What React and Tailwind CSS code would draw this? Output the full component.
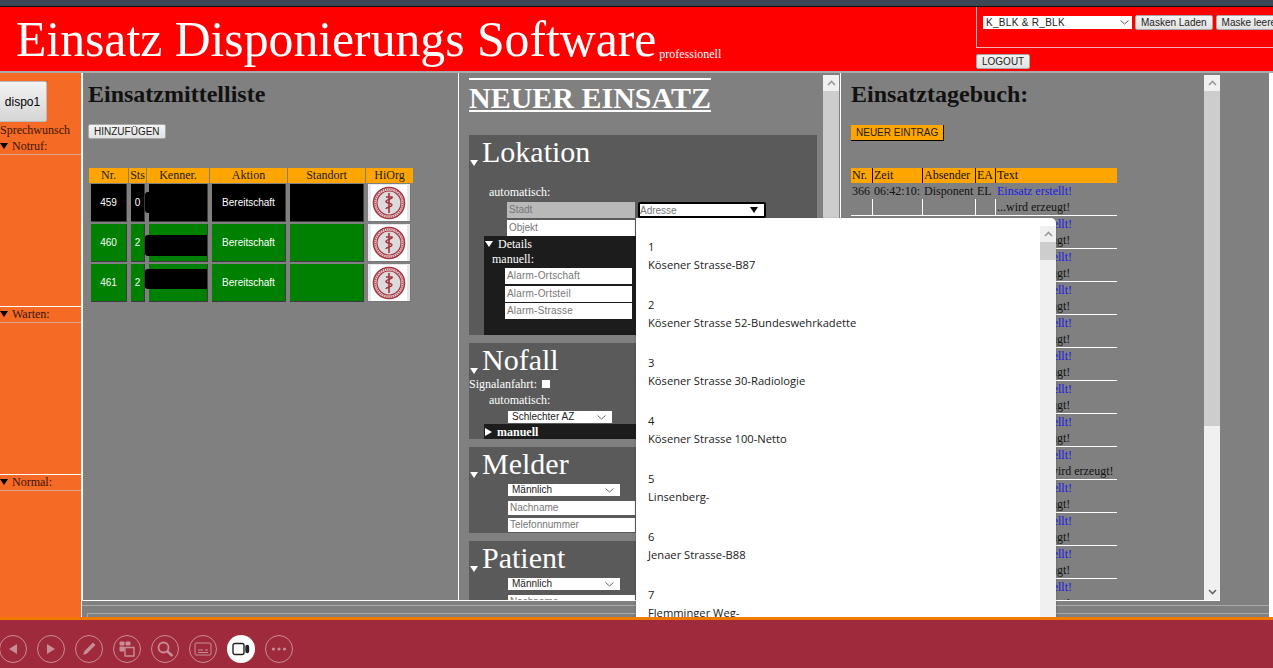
const serif = "font-['Liberation_Serif',serif]";
const sans = "font-['Liberation_Sans',sans-serif]";

const vehicles = [
  { nr: "459", sts: "0", bg: "bg-black", mask: "top-[8px] h-[21px]" },
  { nr: "460", sts: "2", bg: "bg-[#008000]", mask: "top-[11px] h-[21px]" },
  { nr: "461", sts: "2", bg: "bg-[#008000]", mask: "top-[5px] h-[20px]" },
];

const places = [
  "Kösener Strasse-B87",
  "Kösener Strasse 52-Bundeswehrkadette",
  "Kösener Strasse 30-Radiologie",
  "Kösener Strasse 100-Netto",
  "Linsenberg-",
  "Jenaer Strasse-B88",
  "Flemminger Weg-",
];

const vehicleCols = "grid grid-cols-[39px_17px_62px_77px_77px_47px] gap-x-px";
const journalCols = "grid grid-cols-[21px_49px_52px_19px_121px] gap-x-px";

function Btn({ children, className = "" }) {
  return (
    <button className={`${sans} h-[15px] shrink-0 rounded-[2px] border border-[#a8a8a8] bg-gradient-to-b from-[#f4f4f4] to-[#e2e2e2] px-[5px] text-[10px] leading-[13px] text-[#222] ${className}`}>
      {children}
    </button>
  );
}

function Arrow({ className = "" }) {
  return <span className={`inline-block shrink-0 border-x-[4px] border-x-transparent border-t-[6px] border-t-current ${className}`} />;
}

function Field({ children, className = "" }) {
  return (
    <div className={`${sans} flex h-[16px] items-center bg-white pl-[2px] text-[10px] leading-none text-[#777] ${className}`}>
      {children}
    </div>
  );
}

function FakeSelect({ children, className = "" }) {
  return (
    <div className={`${sans} flex h-[12px] items-center justify-between bg-white pl-[4px] pr-[6px] text-[10px] leading-none text-[#222] ${className}`}>
      {children}
      <svg width="9" height="5" viewBox="0 0 9 5"><path d="M.5.5l4 3.5 4-3.5" fill="none" stroke="#666" strokeWidth="1" /></svg>
    </div>
  );
}

function Scrollbar({ thumb, className = "" }) {
  return (
    <div className={`flex w-[16px] shrink-0 flex-col bg-[#f0f0f0] ${className}`}>
      <div className="flex h-[16px] items-center justify-center">
        <svg width="9" height="6" viewBox="0 0 9 6"><path d="M1 5l3.5-3.5L8 5" fill="none" stroke="#999" strokeWidth="1.6" /></svg>
      </div>
      <div className={`bg-[#cdcdcd] ${thumb}`} />
      <div className="flex-1" />
      <div className="flex h-[16px] items-center justify-center">
        <svg width="9" height="6" viewBox="0 0 9 6"><path d="M1 1l3.5 3.5L8 1" fill="none" stroke="#666" strokeWidth="1.6" /></svg>
      </div>
    </div>
  );
}

function HiOrgLogo() {
  return (
    <div className="flex h-[38px] w-[44px] items-center justify-center border-b border-r border-[#777] bg-[#e8e8e8]">
      <svg width="36" height="36" viewBox="0 0 36 36">
        <rect width="36" height="36" fill="#fff" />
        <circle cx="18" cy="18" r="15.5" fill="#e2dfe0" stroke="#a8323c" strokeWidth="1.6" />
        <circle cx="18" cy="18" r="12" fill="#dcdadb" stroke="#a8323c" strokeWidth="1.2" />
        <circle cx="18" cy="18" r="13.8" fill="none" stroke="#b5505a" strokeWidth="1.6" strokeDasharray="1.2 1" />
        <path d="M18 8v20" stroke="#a8323c" strokeWidth="1.6" />
        <path d="M15 12h6c1.5 1.5-6 2.5-6 4.5s6 1.5 6 3.5-6 2-6 4" fill="none" stroke="#a8323c" strokeWidth="1.5" />
      </svg>
    </div>
  );
}

function VehicleList() {
  const cell = "ml-[2px] mr-px flex h-[38px] items-center justify-center border-b border-r border-[#3c3c3c] text-[10px] text-white";
  const head = `${serif} bg-[#ffa500] text-center text-[12px] leading-[15px] text-[#222]`;
  return (
    <section className="w-[377px] shrink-0 overflow-hidden border-r border-l border-white bg-[#808080] pl-[5px]">
      <h2 className={`${serif} mt-[8px] text-[24px] font-bold leading-[26px] text-[#111]`}>Einsatzmittelliste</h2>
      <Btn className="mt-[17px]">HINZUFÜGEN</Btn>
      <div className={`${sans} ${vehicleCols} ml-px mt-[27px]`}>
        {["Nr.", "Sts", "Kenner.", "Aktion", "Standort", "HiOrg"].map((h) => (
          <div key={h} className={head}>{h}</div>
        ))}
      </div>
      <div className="ml-px mt-px flex flex-col gap-[2px]">
        {vehicles.map((v) => (
          <div key={v.nr} className={`${sans} ${vehicleCols}`}>
            <div className={`${cell} ${v.bg}`}>{v.nr}</div>
            <div className={`${cell} ${v.bg}`}>{v.sts}</div>
            <div className={`${cell} ${v.bg} relative`}>
              <div className={`absolute -left-[4px] right-0 rounded-l-[3px] bg-black ${v.mask}`} />
            </div>
            <div className={`${cell} ${v.bg}`}>Bereitschaft</div>
            <div className={`${cell} ${v.bg}`}>&nbsp;</div>
            <div className="mx-[2px] flex"><HiOrgLogo /></div>
          </div>
        ))}
      </div>
    </section>
  );
}

function SectionTitle({ children }) {
  return (
    <div className="flex items-end leading-none text-white">
      <Arrow className="mb-[3px] ml-[1px] mr-[4px]" />
      <span className="text-[30px] leading-[34px]">{children}</span>
    </div>
  );
}

function NewIncident() {
  return (
    <section className={`${serif} flex w-[382px] shrink-0 overflow-hidden border-r border-white bg-[#808080]`}>
      <div className="w-[364px] shrink-0 pl-[10px]">
        <h1 className="mt-[5px] w-fit border-y-[2px] border-white pt-[6px] text-[30px] font-bold leading-[24px] text-white">NEUER EINSATZ</h1>
        <div className="mt-[23px] h-[200px] w-[348px] bg-[#5a5a5a]">
          <SectionTitle>Lokation</SectionTitle>
          <div className="ml-[20px] mt-[15px] text-[12px] leading-[16px] text-white">automatisch:</div>
          <div className="ml-[38px] mt-[2px] flex gap-[3px]">
            <Field className="w-[128px] !bg-[#b9b9b9]">Stadt</Field>
            <div className={`${sans} flex h-[16px] w-[128px] items-center justify-between rounded-[2px] border-2 border-black bg-white pr-[6px] text-[10px] text-[#777]`}>
              Adresse<Arrow className="text-black" />
            </div>
          </div>
          <Field className="ml-[38px] mt-[2px] w-[128px]">Objekt</Field>
          <div className="ml-[15px] h-[99px] bg-[#1c1c1c] text-[12px] leading-[16px] text-white">
            <div className="flex h-[15px] items-center pl-[1px]"><Arrow className="mr-[5px]" />Details</div>
            <div className="ml-[8px]">manuell:</div>
            <div className="ml-[21px] mt-px flex w-[127px] flex-col gap-[1.5px] tracking-[0.2px]">
              <Field>Alarm-Ortschaft</Field>
              <Field>Alarm-Ortsteil</Field>
              <Field>Alarm-Strasse</Field>
            </div>
          </div>
        </div>
        <div className="mt-[8px] h-[96px] w-[348px] bg-[#5a5a5a] text-[12px] leading-[16px] text-white">
          <SectionTitle>Nofall</SectionTitle>
          <div className="-mt-[1px] flex items-center">Signalanfahrt:<span className="ml-[5px] h-[8px] w-[8px] bg-white" /></div>
          <div className="ml-[20px]">automatisch:</div>
          <FakeSelect className="ml-[39px] mt-[3px] w-[104px]">Schlechter AZ</FakeSelect>
          <div className="ml-[15px] mt-[1px] flex h-[15px] items-center bg-[#1c1c1c] pl-[1px] font-bold">
            <span className="mr-[5px] border-y-[4px] border-l-[7px] border-y-transparent border-l-white" />manuell
          </div>
        </div>
        <div className="mt-[8px] h-[86px] w-[348px] bg-[#5a5a5a]">
          <SectionTitle>Melder</SectionTitle>
          <FakeSelect className="ml-[39px] mt-[3px] w-[112px]">Männlich</FakeSelect>
          <Field className="ml-[39px] mt-[5px] w-[127px] !h-[14px]">Nachname</Field>
          <Field className="ml-[39px] mt-[3px] w-[127px] !h-[14px]">Telefonnummer</Field>
        </div>
        <div className="mt-[8px] h-[60px] w-[348px] bg-[#5a5a5a]">
          <SectionTitle>Patient</SectionTitle>
          <FakeSelect className="ml-[39px] mt-[3px] w-[112px]">Männlich</FakeSelect>
          <Field className="ml-[39px] mt-[5px] w-[127px] !h-[14px]">Nachname</Field>
        </div>
      </div>
      <Scrollbar thumb="flex-1" className="mt-[2px]" />
    </section>
  );
}

function Journal() {
  const rows = Array.from({ length: 13 }, (_, i) => i);
  return (
    <section className={`${serif} flex h-full w-[379px] shrink-0 overflow-hidden border-b border-white bg-[#808080]`}>
      <div className="w-[363px] shrink-0 pl-[10px]">
        <h2 className="mt-[8px] text-[24px] font-bold leading-[26px] text-[#111]">Einsatztagebuch:</h2>
        <Btn className="mt-[18px] h-[16px] !rounded-none !border-0 !border-b !border-r !border-black !bg-none bg-[#ffa500]">NEUER EINTRAG</Btn>
        <div className={`${journalCols} mt-[25px] w-[266px] bg-[#111] text-[12px] leading-[15px] text-[#111]`}>
          {["Nr.", "Zeit", "Absender", "EA", "Text"].map((h) => (
            <div key={h} className="bg-[#ffa500] pl-px">{h}</div>
          ))}
        </div>
        {rows.map((i) => (
          <div key={i} className="h-[33px] w-[266px] border-b border-white text-[12px] leading-[16px] text-[#111]">
            <div className={journalCols}>
              <div className="pl-px">{i === 0 ? "366" : ""}</div>
              <div className="pl-px">{i === 0 ? "06:42:10:" : ""}</div>
              <div className="pl-px">{i === 0 ? "Disponent" : ""}</div>
              <div className="pl-px">{i === 0 ? "EL" : ""}</div>
              <div className="pl-px text-[#1a1ae6]">Einsatz erstellt!</div>
            </div>
            <div className={`${journalCols} h-[16px]`}>
              <div />
              <div className="-ml-px border-l border-white" />
              <div className="-ml-px border-l border-white" />
              <div className="-ml-px border-l border-white" />
              <div className="-ml-px whitespace-nowrap border-l border-white pl-px">{i === 8 ? "...Vorgang wird erzeugt!" : "...wird erzeugt!"}</div>
            </div>
          </div>
        ))}
      </div>
      <Scrollbar thumb="h-[335px]" className="mt-[2px]" />
    </section>
  );
}

function Toolbar() {
  const ring = "flex h-[28px] w-[28px] items-center justify-center rounded-full border border-[#c98d96]";
  const c = "#c98d96";
  return (
    <footer className="flex h-[51px] shrink-0 items-start gap-[10px] border-t-[3px] border-[#f07a00] bg-[#9e2a3b] pt-[15px]">
      <div className={`${ring} -ml-px`}><svg width="12" height="14" viewBox="0 0 12 14"><path d="M10 2v10L2 7z" fill={c} /></svg></div>
      <div className={ring}><svg width="12" height="14" viewBox="0 0 12 14"><path d="M2 2v10l8-5z" fill={c} /></svg></div>
      <div className={ring}><svg width="18" height="18" viewBox="0 0 18 18"><path d="M3 15l1.5-4L13 2.5 15.5 5 7 13.5z" fill={c} /></svg></div>
      <div className={ring}><svg width="18" height="18" viewBox="0 0 18 18" fill="none" stroke={c}><path d="M2 2h4v3H2zM8 2h4v3H8zM2 7h4v4H2z" fill={c} /><path d="M7 7.500h9v8.500H7z" strokeWidth="1.4" /></svg></div>
      <div className={ring}><svg width="18" height="18" viewBox="0 0 18 18" fill="none" stroke={c} strokeWidth="1.8"><circle cx="7.500" cy="7.500" r="5" /><path d="M11 11l5.500 5" strokeWidth="2.400" /></svg></div>
      <div className={ring}><svg width="18" height="14" viewBox="0 0 18 14" fill="none" stroke={c}><rect x="1" y="1" width="16" height="12" rx="1" /><path d="M4 8h5M11 8h3M4 10.500h10" /></svg></div>
      <div className="flex h-[28px] w-[28px] items-center justify-center rounded-full bg-white"><svg width="18" height="14" viewBox="0 0 18 14" fill="none" stroke="#222" strokeWidth="1.4"><rect x="1" y="1.500" width="11" height="11" rx="2" /><rect x="14" y="3.500" width="2.500" height="7" rx="1.200" fill="#222" /></svg></div>
      <div className={ring}><svg width="16" height="4" viewBox="0 0 16 4" fill={c}><circle cx="2.500" cy="2" r="1.600" /><circle cx="8" cy="2" r="1.600" /><circle cx="13.500" cy="2" r="1.600" /></svg></div>
    </footer>
  );
}

export default function App() {
  return (
    <div className="flex h-[668px] w-[1273px] flex-col overflow-hidden bg-white">
      <div className="h-[7px] shrink-0 border-b border-[#111] bg-[#3b4754]" />
      <header className={`${serif} flex h-[64px] shrink-0 justify-between bg-[#ff0000] text-white`}>
        <div className="flex items-end whitespace-nowrap pl-[16px]">
          <span className="text-[49.7px] leading-[62px]">Einsatz Disponierungs Software</span>
          <span className="mb-[11px] ml-[3px] text-[12px] leading-none">professionell</span>
        </div>
        <div className="w-[297px] shrink-0 overflow-hidden">
          <div className="flex h-[41px] items-start gap-[3px] border-b border-l border-[#f2b0b0] pl-[6px] pt-[8px]">
            <div className={`${sans} mt-px flex h-[13px] w-[149px] shrink-0 items-center justify-between bg-white pl-[3px] pr-[3px] text-[10px] tracking-[0.3px] text-[#222]`}>
              K_BLK &amp; R_BLK
              <svg width="9" height="5" viewBox="0 0 9 5"><path d="M.5.5l4 3.500 4-3.500" fill="none" stroke="#555" /></svg>
            </div>
            <Btn>Masken Laden</Btn>
            <Btn>Maske leeren</Btn>
          </div>
          <Btn className="mt-[4px]">LOGOUT</Btn>
        </div>
      </header>
      <main className="relative flex min-h-0 flex-1 overflow-hidden border-t-2 border-[#aaa] bg-[#808080]">
        <aside className={`${serif} w-[82px] shrink-0 border-r border-white bg-[#f56a24] text-[12px] leading-[16px] text-[#3a1505]`}>
          <button className={`${sans} -ml-[2px] mt-[8px] block h-[41px] w-[49px] rounded-[2px] border border-[#bbb] bg-gradient-to-b from-[#f3f3f3] to-[#d5d5d5] text-[12px] font-medium text-black`}>dispo1</button>
          <div>Sprechwunsch</div>
          <div className="h-[161px]">
            <div className="flex h-[17px] items-center border-b border-[#d9a58c]"><Arrow className="mr-[4px] text-black" />Notruf:</div>
          </div>
          <div className="mt-[7px] border-t border-white">
            <div className="flex h-[16px] items-center border-b border-[#d9a58c] pb-px"><Arrow className="mr-[4px] text-black" />Warten:</div>
          </div>
          <div className="mt-[151px] border-t border-white">
            <div className="flex h-[16px] items-center border-b border-[#d9a58c] pb-px"><Arrow className="mr-[4px] text-black" />Normal:</div>
          </div>
        </aside>
        <div className="flex min-w-0 flex-1 flex-col">
          <div className="flex h-[528px] shrink-0">
            <div className="flex border-b border-white"><VehicleList /><NewIncident /></div>
            <Journal />
          </div>
          <div className="flex-1 pt-[4px]">
            <div className="h-[8px] border-t border-[#aaa]" />
            <div className="ml-[5px] h-[4px] border-l border-t border-[#aaa]" />
          </div>
        </div>
        <div className="w-[4px] shrink-0 bg-white" />
        <div className="absolute left-[636px] top-[145px] h-[420px] w-[420px] rounded-tr-[5px] bg-white shadow-[0_1px_3px_rgba(0,0,0,0.25)]">
          <div className="absolute bottom-0 right-0 top-[8px]"><Scrollbar thumb="h-[18px]" className="h-full" /></div>
          <div className="flex flex-col gap-[22px] pl-[12px] pt-[20px] font-['Open_Sans',sans-serif] text-[11.2px] leading-[18px] text-[#1a1a1a]">
            {places.map((p, i) => (
              <div key={p}><div>{i + 1}</div><div>{p}</div></div>
            ))}
          </div>
        </div>
      </main>
      <Toolbar />
    </div>
  );
}
